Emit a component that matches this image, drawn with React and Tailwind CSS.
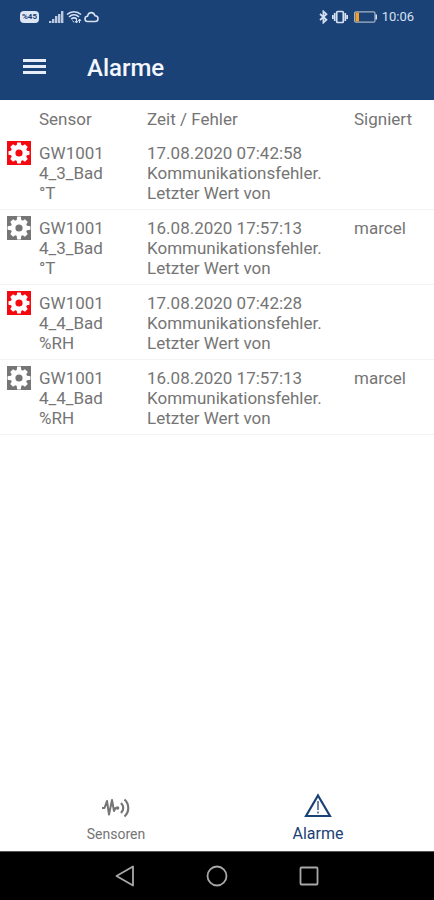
import React from "react";

const alarms = [
  { id: 1, active: true, sensor: ["GW1001", "4_3_Bad", "°T"], time: "17.08.2020 07:42:58", signed: "" },
  { id: 2, active: false, sensor: ["GW1001", "4_3_Bad", "°T"], time: "16.08.2020 17:57:13", signed: "marcel" },
  { id: 3, active: true, sensor: ["GW1001", "4_4_Bad", "%RH"], time: "17.08.2020 07:42:28", signed: "" },
  { id: 4, active: false, sensor: ["GW1001", "4_4_Bad", "%RH"], time: "16.08.2020 17:57:13", signed: "marcel" },
];

function StatusBar() {
  return (
    <div className="flex h-[34px] items-center justify-between px-5 text-[#d5e0f2]">
      <div className="flex items-center">
        <span className="flex h-3 w-[19px] items-center justify-center rounded-sm bg-[#dce6f5] text-[8px] leading-3 font-bold text-[#1b4276]">
          %45
        </span>
        <svg className="ml-2.5 h-[14px] w-[15px]" viewBox="0 0 15 14" fill="currentColor" aria-hidden="true">
          <path d="M0 11h2.400v2H0zM3 9h2.400v4H3zM6 6h2.400v7H6zM9 4h2.400v9H9zM12 1h2.400v12H12z" opacity=".85" />
        </svg>
        <svg className="ml-0.5 h-[14px] w-4" viewBox="0 0 16 14" fill="none" stroke="currentColor" strokeWidth="1.700" aria-hidden="true">
          <path d="M1 4.500C5 .8 11 .8 15 4.500M3 7c3-2.800 7-2.800 10 0M5.200 9c1.700-1.400 3.900-1.400 5.600 0" />
          <path d="M6.500 10.500 8 12.500M10.500 9v4M9 11l1.500 2 1.500-2M13.500 13V9M12 11l1.500-2L15 11" strokeWidth="1" />
        </svg>
        <svg className="ml-0.5 h-3 w-[15px]" viewBox="0 0 15 12" fill="none" stroke="currentColor" strokeWidth="1.600" aria-hidden="true">
          <path d="M3.700 10.500a2.600 2.600 0 0 1-.2-5.200C4 3 5.400 1.600 7.300 1.600c1.900 0 3.200 1.300 3.700 3.200 1.800 0 3 1.200 3 2.900s-1.200 2.800-2.900 2.800z" />
        </svg>
      </div>
      <div className="flex items-center">
        <svg className="h-[14px] w-[9px]" viewBox="0 0 9 14" fill="none" stroke="currentColor" strokeWidth="1.700" aria-hidden="true">
          <path d="m1 4 6.500 5.800L4.400 12.600V1.400L7.500 4.200 1 10" />
        </svg>
        <svg className="ml-1 h-[14px] w-4" viewBox="0 0 16 14" fill="none" stroke="currentColor" strokeWidth="1.700" aria-hidden="true">
          <rect x="4.700" y="1.500" width="6.600" height="11" rx="1" />
          <path d="M2.700 3v8M13.300 3v8M.800 5v4M15.200 5v4" />
        </svg>
        <svg className="ml-1.5 h-3 w-6" viewBox="0 0 24 12" fill="none" aria-hidden="true">
          <rect x=".6" y=".8" width="20.400" height="10.400" rx="1.500" stroke="#a9b4c2" strokeWidth="1.200" />
          <path d="M1.500 1.500H5v9H1.500z" fill="#f5a02a" />
          <path d="M21.500 3.500h1.500v5h-1.500z" fill="#d5e0f2" />
        </svg>
        <span className="ml-1 text-[13px] leading-4">10:06</span>
      </div>
    </div>
  );
}

function GearBadge({ active }) {
  return (
    <svg
      className={active ? "h-6 w-6 text-[#f5080f]" : "h-6 w-6 text-[#757575]"}
      viewBox="0 0 24 24"
      role="img"
      aria-label={active ? "Aktiv" : "Quittiert"}
    >
      <path d="M0 0h24v24H0z" fill="currentColor" />
      <g fill="#fff">
        <circle cx="12" cy="12" r="8.200" />
        {active ? (
          <path d="M10.200 1.500h3.600l.7 4h-5zM10.200 22.500h3.600l.7-4h-5zM1.500 10.200v3.600l4 .7v-5zM22.500 10.200v3.600l-4 .7v-5z" />
        ) : (
          <path d="M10.200.6h3.600l.7 5h-5zM10.200 23.400h3.600l.7-5h-5zM.6 10.200v3.600l5 .7v-5zM23.400 10.200v3.600l-5 .7v-5z" />
        )}
        <path
          d="M10 1.600h4l.7 4H9.300zM10 22.400h4l.7-4H9.300zM1.600 10v4l4 .7V9.300zM22.400 10v4l-4 .7V9.300z"
          transform="rotate(45 12 12)"
        />
      </g>
      <circle cx="12" cy="12" r="3.600" fill="currentColor" />
    </svg>
  );
}

function AlarmTable() {
  return (
    <table className="w-full table-fixed border-collapse text-left text-[17px] leading-5 text-[#757575]">
      <colgroup>
        <col className="w-[39px]" />
        <col className="w-[108px]" />
        <col />
        <col className="w-20" />
      </colgroup>
      <thead>
        <tr className="h-[35px]">
          <th className="p-0" aria-label="Status" />
          <th className="p-0 pt-0.5 font-normal">Sensor</th>
          <th className="p-0 pt-0.5 font-normal">Zeit / Fehler</th>
          <th className="p-0 pt-0.5 font-normal">Signiert</th>
        </tr>
      </thead>
      <tbody>
        {alarms.map((a) => (
          <tr key={a.id} className="border-b border-[#f3f3f3] align-top">
            <td className="pt-1.5 pl-[7px]"><GearBadge active={a.active} /></td>
            <td className="pt-2 pb-1.5">
              {a.sensor.map((part) => <div key={part}>{part}</div>)}
            </td>
            <td className="pt-2 pb-1.5">
              <div>{a.time}</div>
              <div>Kommunikationsfehler.</div>
              <div>Letzter Wert von</div>
            </td>
            <td className="pt-2 pb-1.5">{a.signed}</td>
          </tr>
        ))}
      </tbody>
    </table>
  );
}

function BottomTabs() {
  return (
    <nav className="grid h-[71px] grid-cols-2 px-[15px]">
      <a href="#sensoren" className="flex flex-col items-center pt-[18px] text-[14px] leading-4 text-[#757575]">
        <svg className="mb-2 h-5 w-7" viewBox="0 0 28 20" fill="none" stroke="currentColor" strokeWidth="2" strokeLinejoin="round" aria-hidden="true">
          <path d="M0 10h2.500L5 3l2 13.500L10 2l2 11 1.500-3H17" />
          <circle cx="15.500" cy="10" r="1.800" fill="currentColor" stroke="none" />
          <path d="M19 5c3 3 3 7 0 10M22.500 1.500c5 4.500 5 12.500 0 17" strokeWidth="2.200" />
        </svg>
        Sensoren
      </a>
      <a href="#alarme" aria-current="page" className="flex flex-col items-center pt-[13px] text-[16px] leading-5 text-[#1b4276]">
        <svg className="mb-[7px] h-6 w-7" viewBox="0 0 28 24" fill="none" stroke="currentColor" aria-hidden="true">
          <path d="M14 2.500 26 23H2z" strokeWidth="2.200" />
          <path d="M14 8v9M14 18.500v2" strokeWidth="2" opacity=".65" />
        </svg>
        Alarme
      </a>
    </nav>
  );
}

function SystemBar() {
  return (
    <div className="flex h-[49px] items-center justify-center gap-[68px] border-t border-[#555555] bg-black text-[#a8a8a8]">
      <button type="button" aria-label="Zurück">
        <svg className="h-6 w-6" viewBox="0 0 24 24" fill="none" stroke="currentColor" strokeWidth="1.800" strokeLinejoin="round" aria-hidden="true">
          <path d="M3.500 12 20 2.500v19z" />
        </svg>
      </button>
      <button type="button" aria-label="Startseite">
        <svg className="h-6 w-6" viewBox="0 0 24 24" fill="none" stroke="currentColor" strokeWidth="1.800" aria-hidden="true">
          <circle cx="12" cy="12" r="9.500" />
        </svg>
      </button>
      <button type="button" aria-label="Übersicht">
        <svg className="h-6 w-6" viewBox="0 0 24 24" fill="none" stroke="currentColor" strokeWidth="1.800" aria-hidden="true">
          <rect x="3.500" y="3.500" width="17" height="17" rx="1" />
        </svg>
      </button>
    </div>
  );
}

export default function App() {
  return (
    <div className="flex min-h-screen flex-col bg-white font-[Roboto,sans-serif]">
      <header className="bg-[#1b4276]">
        <StatusBar />
        <div className="flex h-[66px] items-center pl-[22px]">
          <button type="button" aria-label="Menü" className="mr-[41px] text-[#e8eef8]">
            <svg className="h-6 w-6" viewBox="0 0 24 24" fill="currentColor" aria-hidden="true">
              <path d="M1 4h23v3H1zM1 10h23v3H1zM1 16h23v3H1z" />
            </svg>
          </button>
          <h1 className="pt-0.5 text-[24px] leading-8 font-medium text-[#f3f7fd]">Alarme</h1>
        </div>
      </header>
      <main className="flex-1"><AlarmTable /></main>
      <BottomTabs />
      <SystemBar />
    </div>
  );
}
